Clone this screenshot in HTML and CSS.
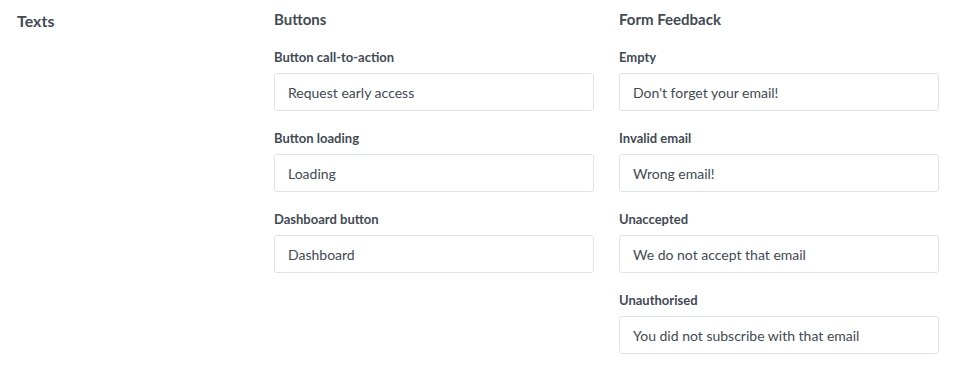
FILE: index.html
```html
<!DOCTYPE html>
<html lang="en">
<head>
    <meta charset="UTF-8">
    <meta name="viewport" content="width=device-width, initial-scale=1.0">
    <title>Texts</title>
    <link rel="stylesheet" href="styles.css">
</head>
<body>
    <div class="settings">
        <h1 class="section-title">Texts</h1>

        <div class="group">
            <h2>Buttons</h2>
            <div class="field">
                <label for="btnCta">Button call-to-action</label>
                <input type="text" id="btnCta" value="Request early access">
            </div>
            <div class="field">
                <label for="btnLoading">Button loading</label>
                <input type="text" id="btnLoading" value="Loading">
            </div>
            <div class="field">
                <label for="btnDashboard">Dashboard button</label>
                <input type="text" id="btnDashboard" value="Dashboard">
            </div>
        </div>

        <div class="group">
            <h2>Form Feedback</h2>
            <div class="field">
                <label for="fbEmpty">Empty</label>
                <input type="text" id="fbEmpty" value="Don't forget your email!">
            </div>
            <div class="field">
                <label for="fbInvalid">Invalid email</label>
                <input type="text" id="fbInvalid" value="Wrong email!">
            </div>
            <div class="field">
                <label for="fbUnaccepted">Unaccepted</label>
                <input type="text" id="fbUnaccepted" value="We do not accept that email">
            </div>
            <div class="field">
                <label for="fbUnauthorised">Unauthorised</label>
                <input type="text" id="fbUnauthorised" value="You did not subscribe with that email">
            </div>
        </div>
    </div>
</body>
</html>
```

FILE: styles.css
```css
body {
    margin: 0;
    background: #fff;
    color: #434a54;
    font-family: Lato, "Liberation Sans", sans-serif;
}
.settings {
    display: grid;
    grid-template-columns: 232px 320px 320px;
    column-gap: 25px;
    padding: 8px 17px;
    align-items: start;
}
.section-title {
    margin: 0;
    font-size: 16px;
    font-weight: 700;
    line-height: 26px;
}
.group h2 {
    margin: 0 0 18px;
    font-size: 15px;
    font-weight: 700;
    line-height: 22px;
}
.field {
    margin-bottom: 18px;
}
.field label {
    display: block;
    margin-bottom: 7px;
    font-size: 13px;
    font-weight: 700;
    line-height: 18px;
}
.field input {
    display: block;
    box-sizing: border-box;
    width: 100%;
    height: 38px;
    padding: 0 13px;
    border: 1px solid #dfe4ea;
    border-radius: 3px;
    background: #fff;
    color: #434a54;
    font-family: inherit;
    font-size: 14px;
}
```
